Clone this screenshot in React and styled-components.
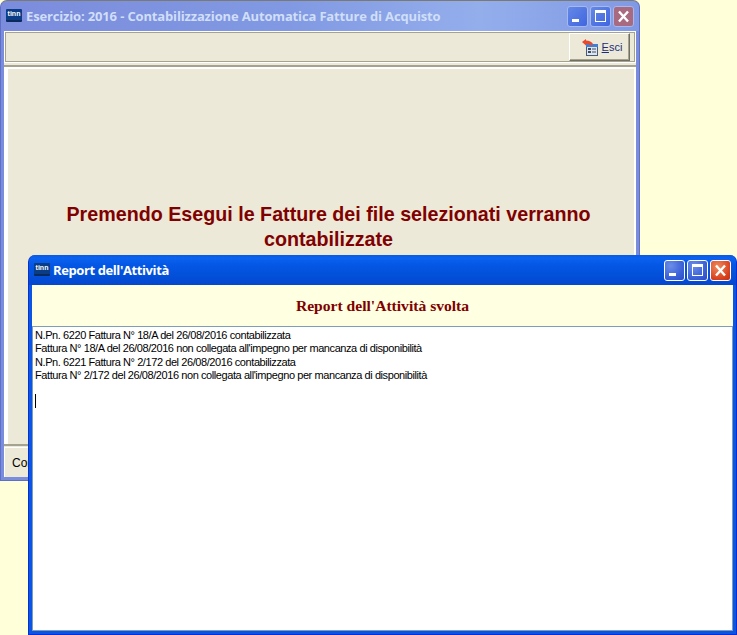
import React from 'react';
import styled, { createGlobalStyle } from 'styled-components';

const GlobalStyle = createGlobalStyle`
    html, body {
        margin: 0;
        padding: 0;
    }
    body {
        width: 737px;
        height: 635px;
        overflow: hidden;
        background: #ffffd9;
        font-family: 'Liberation Sans', Arial, sans-serif;
    }
`;

const Desktop = styled.div`
    position: relative;
    width: 737px;
    height: 635px;
    overflow: hidden;
`;

const Window = styled.div`
    position: absolute;
    left: ${p => p.$left}px;
    top: ${p => p.$top}px;
    width: ${p => p.$width}px;
    height: ${p => p.$height}px;
    box-sizing: border-box;
    display: flex;
    flex-direction: column;
    border-radius: 7px 7px 0 0;
    padding: 0 3px 3px;
    background: ${p => (p.$active ? '#0a55e4' : '#7a8cdc')};
    border-left: 1px solid ${p => (p.$active ? '#0a2fd0' : '#5f6fc8')};
    border-right: 1px solid ${p => (p.$active ? '#0a2fd0' : '#5f6fc8')};
    border-bottom: 1px solid ${p => (p.$active ? '#0a2fd0' : '#5f6fc8')};
    border-top: ${p => (p.$active ? 'none' : '1px solid #7a7a72')};
`;

const TitleBar = styled.div`
    flex: none;
    height: 30px;
    margin: 0 -3px;
    padding: 0 5px;
    box-sizing: border-box;
    display: flex;
    align-items: center;
    gap: ${p => (p.$active ? 3 : 4)}px;
    border-radius: 7px 7px 0 0;
    background: ${p => (p.$active
        ? 'linear-gradient(180deg, #0a5ae8 0%, #0a62ee 12%, #0456e4 35%, #0350d8 70%, #0546d0 100%)'
        : 'linear-gradient(90deg, #7b8cdc 0%, #8199e2 45%, #94aeec 75%, #8099e4 100%)')};
`;

const AppIcon = styled.span`
    flex: none;
    width: 16px;
    height: 11px;
    margin-top: -1px;
    background: #0b3d86;
    border-bottom: 2px solid #0a2a5c;
    border-radius: 1px;
    color: #ffffff;
    font: bold 7px/10px 'Liberation Sans', sans-serif;
    text-align: center;
    overflow: hidden;
`;

const Title = styled.span`
    flex: 1;
    white-space: nowrap;
    overflow: hidden;
    font-size: 13px;
    font-weight: bold;
    font-family: 'Open Sans', 'Liberation Sans', sans-serif;
    letter-spacing: ${p => p.$spacing}px;
    color: ${p => (p.$active ? '#ffffff' : '#d0def8')};
`;

const CaptionButtons = styled.div`
    flex: none;
    display: flex;
    gap: 2px;
`;

const CaptionButton = styled.div`
    width: 21px;
    height: 21px;
    box-sizing: border-box;
    border-radius: 3px;
    border: 1px solid ${p => (p.$active ? '#ffffff' : '#a6b8ec')};
    display: flex;
    align-items: center;
    justify-content: center;
    background: ${p => {
        if (p.$close) return p.$active ? 'radial-gradient(circle at 35% 30%, #ee8a60, #d8401c 70%, #c03010)' : '#a86a80';
        return p.$active ? 'radial-gradient(circle at 30% 25%, #6c8ee8, #3c62d8 60%, #2a4cc4)' : 'linear-gradient(135deg, #6488e6, #3f66e0)';
    }};
`;

const Body = styled.div`
    flex: 1;
    min-height: 0;
    display: flex;
    flex-direction: column;
    background: #ece9d8;
`;

const Toolbar = styled.div`
    flex: none;
    height: 32px;
    box-sizing: border-box;
    background: #ece9d8;
    border: 1px solid #ffffff;
    box-shadow: inset 1px 1px 0 #a5a290, inset -1px -1px 0 #a5a290;
    display: flex;
    justify-content: flex-end;
    align-items: center;
    padding-right: 5px;
`;

const ExitButton = styled.div`
    width: 61px;
    height: 28px;
    box-sizing: border-box;
    background: #ece9d8;
    border: 1px solid;
    border-color: #ffffff #716f64 #716f64 #ffffff;
    box-shadow: inset -1px -1px 0 #a5a290;
    display: flex;
    align-items: center;
    justify-content: center;
    gap: 4px;
    padding-left: 5px;
    font-size: 11px;
    color: #1c2f78;
    u {
        text-underline-offset: 1px;
    }
`;

const MainPanel = styled.div`
    flex: 1;
    margin-top: 2px;
    box-sizing: border-box;
    background: #ece9d8;
    border-top: 2px solid #a5a290;
    border-bottom: 2px solid #a5a290;
    box-shadow: inset 0 2px 0 #ffffff, inset 4px 0 0 #ffffff, inset -2px 0 0 #ffffff;
    padding: 135px 27px 0 44px;
`;

const Notice = styled.h1`
    margin: 0;
    text-align: center;
    font-size: 19.7px;
    line-height: 24.5px;
    font-weight: bold;
    color: #800000;
`;

const StatusBar = styled.div`
    flex: none;
    height: 30px;
    margin-top: 1px;
    box-sizing: border-box;
    background: #ece9d8;
    border-top: 1px solid #ffffff;
    border-left: 1px solid #ffffff;
    display: flex;
    align-items: center;
    padding-left: 7px;
    font-size: 12px;
    color: #000000;
`;

const ReportHeader = styled.div`
    flex: none;
    height: 41px;
    background: #ffffe1;
    display: flex;
    align-items: center;
    justify-content: center;
    font-family: 'Liberation Serif', 'Times New Roman', serif;
    font-size: 15.6px;
    font-weight: bold;
    color: #800000;
`;

const ReportBox = styled.div`
    flex: 1;
    box-sizing: border-box;
    background: #ffffff;
    border: 1px solid #7f9db9;
    padding: 2px 2px;
    font-size: 11px;
    line-height: 13.33px;
    letter-spacing: -0.42px;
    color: #000000;
`;

const ReportLine = styled.div`
    white-space: nowrap;
    min-height: 13.33px;
`;

const Caret = styled.div`
    width: 1px;
    height: 14px;
    margin-top: -2px;
    background: #000000;
`;

const MinimizeGlyph = () => (
    <svg width="19" height="19" viewBox="0 0 19 19">
        <rect x="4" y="12" width="7" height="3" fill="#ffffff" />
    </svg>
);

const MaximizeGlyph = () => (
    <svg width="19" height="19" viewBox="0 0 19 19">
        <rect x="4.5" y="3.5" width="10" height="11" fill="none" stroke="#ffffff" strokeWidth="1" />
        <rect x="4" y="3" width="11" height="3" fill="#ffffff" />
    </svg>
);

const CloseGlyph = () => (
    <svg width="19" height="19" viewBox="0 0 19 19">
        <path d="M5 4.5 L14 14.5 M14 4.5 L5 14.5" stroke="#ffffff" strokeWidth="2.4" />
    </svg>
);

const ExitIcon = () => (
    <svg width="16" height="17" viewBox="0 0 16 17">
        <rect x="4.5" y="5.5" width="11" height="11" fill="#dfe3ea" stroke="#4a5a78" />
        <rect x="4" y="5" width="12" height="3" fill="#3f7fd8" />
        <rect x="6" y="9" width="3" height="2" fill="#3c4c68" />
        <rect x="10" y="9" width="4" height="2" fill="#8c98ac" />
        <rect x="6" y="12" width="3" height="2" fill="#3c4c68" />
        <rect x="10" y="12" width="4" height="2" fill="#8c98ac" />
        <path d="M0 3 L4 0 L4 1.5 Q9 1.5 11 5 L11 6 L8 6 Q6 4.5 4 5 L4 6.5 Z" fill="#e8482c" />
    </svg>
);

const WindowTitle = ({ active, spacing, children }) => (
    <TitleBar $active={active}>
        <AppIcon>tinn</AppIcon>
        <Title $active={active} $spacing={spacing}>{children}</Title>
        <CaptionButtons>
            <CaptionButton $active={active}><MinimizeGlyph /></CaptionButton>
            <CaptionButton $active={active}><MaximizeGlyph /></CaptionButton>
            <CaptionButton $active={active} $close><CloseGlyph /></CaptionButton>
        </CaptionButtons>
    </TitleBar>
);

const reportLines = [
    "N.Pn. 6220 Fattura N° 18/A del 26/08/2016 contabilizzata",
    "Fattura N° 18/A del 26/08/2016 non collegata all'impegno per mancanza di disponibilità",
    "N.Pn. 6221 Fattura N° 2/172 del 26/08/2016 contabilizzata",
    "Fattura N° 2/172 del 26/08/2016 non collegata all'impegno per mancanza di disponibilità",
    ""
];

export default function App() {
    return (
        <Desktop>
            <GlobalStyle />
            <Window $left={0} $top={0} $width={640} $height={481}>
                <WindowTitle spacing={-0.15}>Esercizio: 2016 - Contabilizzazione Automatica Fatture di Acquisto</WindowTitle>
                <Body>
                    <Toolbar>
                        <ExitButton>
                            <ExitIcon />
                            <span><u>E</u>sci</span>
                        </ExitButton>
                    </Toolbar>
                    <MainPanel>
                        <Notice>Premendo Esegui le Fatture dei file selezionati verranno contabilizzate</Notice>
                    </MainPanel>
                    <StatusBar>Contabilizzazione</StatusBar>
                </Body>
            </Window>
            <Window $active $left={28} $top={255} $width={709} $height={380}>
                <WindowTitle active spacing={-0.4}>Report dell'Attività</WindowTitle>
                <ReportHeader>Report dell'Attività svolta</ReportHeader>
                <ReportBox>
                    {reportLines.map((line, i) => <ReportLine key={i}>{line}</ReportLine>)}
                    <Caret />
                </ReportBox>
            </Window>
        </Desktop>
    );
}
